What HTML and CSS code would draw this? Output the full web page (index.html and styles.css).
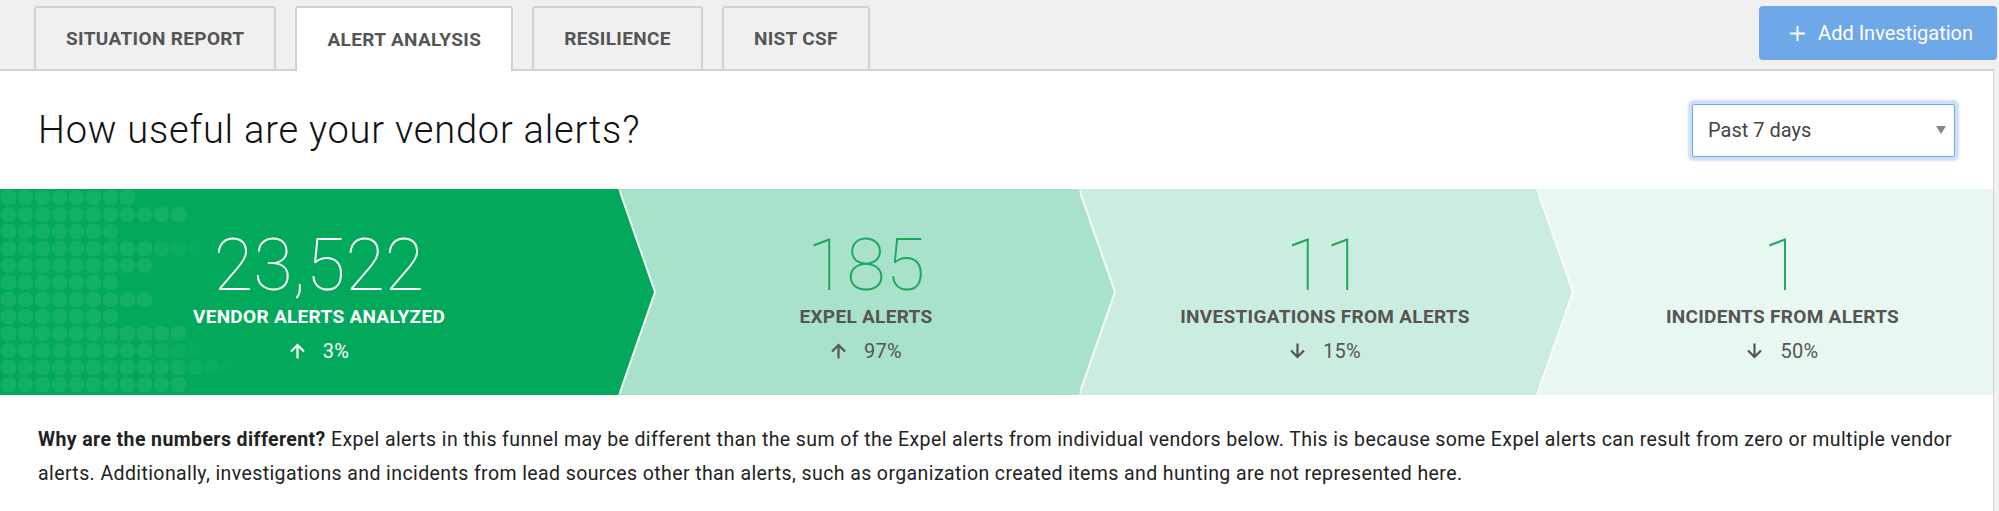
FILE: index.html
```html
<!DOCTYPE html>
<html lang="en">
<head>
  <meta charset="UTF-8" />
  <meta name="viewport" content="width=device-width, initial-scale=1.0" />
  <title>Alert Analysis</title>
  <link rel="stylesheet" href="styles.css">
</head>
<body>
  <div class="topbar">
    <nav class="tabs">
      <a class="tab">SITUATION REPORT</a>
      <a class="tab active">ALERT ANALYSIS</a>
      <a class="tab">RESILIENCE</a>
      <a class="tab">NIST CSF</a>
    </nav>
    <button class="add-btn">
      <svg width="17" height="17" viewBox="0 0 17 17"><path d="M8.5 1v15M1 8.5h15" stroke="#fff" stroke-width="2" fill="none"/></svg>
      Add Investigation
    </button>
  </div>

  <div class="card">
    <div class="card-head">
      <h1>How useful are your vendor alerts?</h1>
      <div class="select">Past 7 days<span class="caret"></span></div>
    </div>

    <div class="funnel">
      <div class="step step-1">
        <div class="dots">
          <span class="d8"></span>
          <span class="d11"></span>
          <span class="d7"></span>
          <span class="d13 fade"></span>
          <span class="d9"></span>
          <span class="d7"></span>
          <span class="d9"></span>
          <span class="d7"></span>
          <span class="d11"></span>
          <span class="d13 fade"></span>
          <span class="d15 fade"></span>
          <span class="d11"></span>
        </div>
        <div class="step-body">
          <div class="num">23,522</div>
          <div class="label">VENDOR ALERTS ANALYZED</div>
          <div class="change">
            <svg width="17" height="16" viewBox="0 0 17 16"><path d="M8.5 15.5V2M2 8.5L8.5 2L15 8.5" fill="none" stroke="currentColor" stroke-width="2.2"/></svg>
            <span>3%</span>
          </div>
        </div>
      </div>

      <div class="step step-2">
        <div class="step-body">
          <div class="num">185</div>
          <div class="label">EXPEL ALERTS</div>
          <div class="change">
            <svg width="17" height="16" viewBox="0 0 17 16"><path d="M8.5 15.5V2M2 8.5L8.5 2L15 8.5" fill="none" stroke="currentColor" stroke-width="2.2"/></svg>
            <span>97%</span>
          </div>
        </div>
      </div>

      <div class="step step-3">
        <div class="step-body">
          <div class="num">11</div>
          <div class="label">INVESTIGATIONS FROM ALERTS</div>
          <div class="change">
            <svg width="17" height="16" viewBox="0 0 17 16"><path d="M8.5 0.5V14M2 7.5L8.5 14L15 7.5" fill="none" stroke="currentColor" stroke-width="2.2"/></svg>
            <span>15%</span>
          </div>
        </div>
      </div>

      <div class="step step-4">
        <div class="step-body">
          <div class="num">1</div>
          <div class="label">INCIDENTS FROM ALERTS</div>
          <div class="change">
            <svg width="17" height="16" viewBox="0 0 17 16"><path d="M8.5 0.5V14M2 7.5L8.5 14L15 7.5" fill="none" stroke="currentColor" stroke-width="2.2"/></svg>
            <span>50%</span>
          </div>
        </div>
      </div>
    </div>

    <p class="note"><strong>Why are the numbers different?</strong> Expel alerts in this funnel may be different than the sum of the Expel alerts from individual vendors below. This is because some Expel alerts can result from zero or multiple vendor alerts. Additionally, investigations and incidents from lead sources other than alerts, such as organization created items and hunting are not represented here.</p>
  </div>
</body>
</html>
```

FILE: styles.css
```css
* { box-sizing: border-box; }
body {
  margin: 0;
  font-family: Roboto, "Liberation Sans", sans-serif;
  background: #f1f0f0;
  color: #111;
}

/* top bar with tabs */
.topbar {
  display: flex;
  justify-content: space-between;
  align-items: flex-start;
  height: 69px;
  padding: 6px 2px 0 34px;
}

.tabs {
  display: flex;
  align-items: flex-start;
  gap: 19px;
}

.tab {
  position: relative;
  z-index: 1;
  display: flex;
  align-items: center;
  height: 63px;
  padding: 0 30px;
  border: 2px solid #d2d2d2;
  border-bottom: none;
  border-radius: 3px 3px 0 0;
  background: #f0f0f0;
  font-size: 19px;
  font-weight: 700;
  letter-spacing: 0.35px;
  color: #555;
  cursor: pointer;
}

.tab.active {
  height: 65px;
  background: #fff;
}

.add-btn {
  display: flex;
  align-items: center;
  gap: 12px;
  height: 54px;
  padding: 0 24px 0 30px;
  border: none;
  border-radius: 4px;
  background: #6ea8e8;
  color: #fff;
  font-family: inherit;
  font-size: 20px;
  cursor: pointer;
}

/* card */
.card {
  background: #fff;
  border-top: 2px solid #d2d2d2;
  border-right: 1px solid #d2d2d2;
  margin-right: 5px;
}

.card-head {
  display: flex;
  justify-content: space-between;
  align-items: center;
  height: 118px;
  padding: 0 38px;
}

h1 {
  margin: 0;
  font-size: 38px;
  font-weight: 300;
  line-height: 1;
  letter-spacing: 0.8px;
  color: #111;
}

.select {
  display: flex;
  justify-content: space-between;
  align-items: center;
  width: 263px;
  height: 53px;
  padding: 0 8px 0 15px;
  border: 1px solid #6ea8e6;
  border-radius: 2px;
  box-shadow: 0 0 2px 4px #cde0f6;
  font-size: 20px;
  color: #444;
}

.caret {
  width: 0;
  height: 0;
  border-left: 5.5px solid transparent;
  border-right: 5.5px solid transparent;
  border-top: 8px solid #888;
}

/* funnel */
.funnel {
  display: flex;
  height: 206px;
}

.step {
  position: relative;
  flex: none;
  padding: 41px 0 0 36px;
}

.step::before,
.step::after {
  content: '';
  position: absolute;
  top: 0;
  left: 100%;
  z-index: 1;
  width: 36px;
  height: 100%;
  clip-path: polygon(0 0, 100% 50%, 0 100%);
}

.step::before {
  left: calc(100% + 2px);
  background: rgba(255,255,255,0.85);
}

.step-1 { width: 618px; padding-left: 20px; background: #02a95b; }
.step-2 { width: 460px; background: #a8e2cb; }
.step-3 { width: 458px; background: #cbede0; }
.step-4 { flex: 1; background: #e8f8f1; }

.step-1::after { background: #02a95b; }
.step-2::after { background: #a8e2cb; }
.step-3::after { background: #cbede0; }
.step-4::before,
.step-4::after { display: none; }

.dots {
  position: absolute;
  top: 0;
  left: 0;
}

.dots span {
  display: block;
  height: 17px;
  background: radial-gradient(circle, rgba(255,255,255,0.07) 7.5px, transparent 8px) 0 0 / 17px 17px;
}

.dots .fade {
  -webkit-mask-image: linear-gradient(to right, #000 65%, transparent);
  mask-image: linear-gradient(to right, #000 65%, transparent);
}

.d7 { width: 119px; }
.d8 { width: 136px; }
.d9 { width: 153px; }
.d11 { width: 187px; }
.d13 { width: 221px; }
.d15 { width: 255px; }

.step-body {
  position: relative;
  display: flex;
  flex-direction: column;
  align-items: center;
}

.num {
  font-size: 72px;
  font-weight: 100;
  line-height: 72px;
  color: #1ba85e;
}

.label {
  margin-top: 3px;
  font-size: 19px;
  font-weight: 700;
  line-height: 24px;
  letter-spacing: 0.3px;
  color: #555;
}

.change {
  display: flex;
  align-items: center;
  gap: 17px;
  margin-top: 10px;
  font-size: 20px;
  line-height: 24px;
  letter-spacing: 0.3px;
  color: #555;
}

.step-1 .num,
.step-1 .label,
.step-1 .change { color: #fff; }

.note {
  margin: 0;
  padding: 28px 38px;
  font-size: 19.5px;
  line-height: 34px;
  letter-spacing: 0.4px;
  color: #222;
}
```
